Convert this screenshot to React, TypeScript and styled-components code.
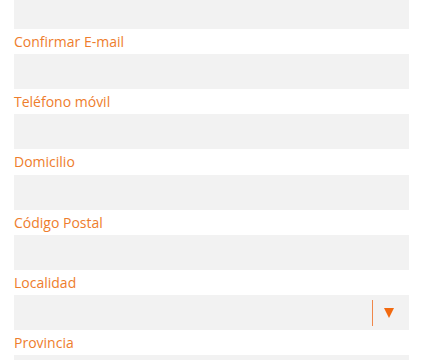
import * as React from "react";
import styled, { createGlobalStyle } from "styled-components";

const GlobalStyle = createGlobalStyle`
  html, body {
    margin: 0;
    padding: 0;
    background: #ffffff;
    overflow: hidden;
  }
  body {
    font-family: "Open Sans", "Liberation Sans", Arial, sans-serif;
  }
`;

const Form = styled.form`
  display: flex;
  flex-direction: column;
  width: 395px;
  margin: -6px 0 0 14px;
`;

const Field = styled.div`
  display: flex;
  flex-direction: column;
`;

const Label = styled.label`
  display: block;
  font-size: 14px;
  line-height: 25.2px;
  color: #ee7d2c;
`;

const Input = styled.input`
  display: block;
  box-sizing: border-box;
  width: 100%;
  height: 35px;
  margin: 0;
  padding: 0 10px;
  border: none;
  outline: none;
  background: #f2f2f2;
  font-family: inherit;
  font-size: 14px;
  color: #333;
`;

const SelectBox = styled.div`
  position: relative;
  display: flex;
  align-items: center;
  justify-content: flex-end;
  box-sizing: border-box;
  height: 35px;
  background: #f2f2f2;
`;

const NativeSelect = styled.select`
  position: absolute;
  inset: 0;
  width: 100%;
  height: 100%;
  opacity: 0;
  cursor: pointer;
`;

const Divider = styled.span`
  width: 1px;
  height: 26px;
  background: #f0874a;
`;

const Caret = styled.span`
  width: 0;
  height: 0;
  margin: 0 15px 0 11px;
  border-left: 5px solid transparent;
  border-right: 5px solid transparent;
  border-top: 10px solid #f26a10;
`;

interface FieldProps {
  label?: string;
  select?: boolean;
}

function FormField({ label, select }: FieldProps) {
  return (
    <Field>
      {label && <Label>{label}</Label>}
      {select ? (
        <SelectBox>
          <NativeSelect aria-label={label}>
            <option></option>
          </NativeSelect>
          <Divider />
          <Caret />
        </SelectBox>
      ) : (
        <Input type="text" aria-label={label} />
      )}
    </Field>
  );
}

export default function App() {
  return (
    <>
      <GlobalStyle />
      <Form>
        <FormField />
        <FormField label="Confirmar E-mail" />
        <FormField label="Teléfono móvil" />
        <FormField label="Domicilio" />
        <FormField label="Código Postal" />
        <FormField label="Localidad" select />
        <FormField label="Provincia" select />
      </Form>
    </>
  );
}
